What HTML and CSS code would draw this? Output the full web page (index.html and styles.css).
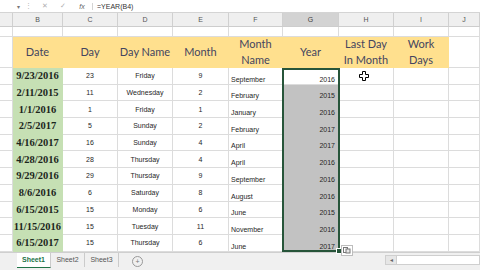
FILE: index.html
```html
<!DOCTYPE html>
<html lang="en">

<head>
    <meta charset="UTF-8">
    <meta name="viewport" content="width=device-width, initial-scale=1.0">
    <title>Book1 - Excel</title>
    <link rel="stylesheet" href="styles.css">
</head>

<body>
    <div class="formula-bar">
        <div class="name-box"><span class="arrow">&#9662;</span></div>
        <div class="grip">&#8942;</div>
        <div class="fb-btn">&#10005;</div>
        <div class="fb-btn">&#10003;</div>
        <div class="fb-btn fx"><i>fx</i></div>
        <div class="formula">=YEAR(B4)</div>
    </div>

    <div class="sheet">
        <div class="row col-heads">
            <div class="ch"></div>
            <div class="ch">B</div>
            <div class="ch">C</div>
            <div class="ch">D</div>
            <div class="ch">E</div>
            <div class="ch">F</div>
            <div class="ch sel">G</div>
            <div class="ch">H</div>
            <div class="ch">I</div>
            <div class="ch">J</div>
        </div>

        <div class="row blank">
            <div class="c"></div><div class="c"></div><div class="c"></div><div class="c"></div><div class="c"></div>
            <div class="c"></div><div class="c"></div><div class="c"></div><div class="c"></div><div class="c"></div>
        </div>

        <div class="row head">
            <div class="c"></div>
            <div class="c y">Date</div>
            <div class="c y">Day</div>
            <div class="c y">Day Name</div>
            <div class="c y">Month</div>
            <div class="c y">Month<br>Name</div>
            <div class="c y">Year</div>
            <div class="c y">Last Day<br>In Month</div>
            <div class="c y">Work<br>Days</div>
            <div class="c"></div>
        </div>

        <div class="row">
            <div class="c"></div><div class="c g">9/23/2016</div><div class="c">23</div><div class="c">Friday</div><div class="c">9</div>
            <div class="c l">September</div><div class="c r">2016</div>
            <div class="c"><svg class="cursor" width="10" height="10" viewBox="0 0 10 10"><path d="M3.5 0.5h3v3h3v3h-3v3h-3v-3h-3v-3h3z" fill="#fff" stroke="#000" stroke-width="1"/></svg></div>
            <div class="c"></div><div class="c"></div>
        </div>
        <div class="row">
            <div class="c"></div><div class="c g">2/11/2015</div><div class="c">11</div><div class="c">Wednesday</div><div class="c">2</div>
            <div class="c l">February</div><div class="c r s">2015</div><div class="c"></div><div class="c"></div><div class="c"></div>
        </div>
        <div class="row">
            <div class="c"></div><div class="c g">1/1/2016</div><div class="c">1</div><div class="c">Friday</div><div class="c">1</div>
            <div class="c l">January</div><div class="c r s">2016</div><div class="c"></div><div class="c"></div><div class="c"></div>
        </div>
        <div class="row">
            <div class="c"></div><div class="c g">2/5/2017</div><div class="c">5</div><div class="c">Sunday</div><div class="c">2</div>
            <div class="c l">February</div><div class="c r s">2017</div><div class="c"></div><div class="c"></div><div class="c"></div>
        </div>
        <div class="row">
            <div class="c"></div><div class="c g">4/16/2017</div><div class="c">16</div><div class="c">Sunday</div><div class="c">4</div>
            <div class="c l">April</div><div class="c r s">2017</div><div class="c"></div><div class="c"></div><div class="c"></div>
        </div>
        <div class="row">
            <div class="c"></div><div class="c g">4/28/2016</div><div class="c">28</div><div class="c">Thursday</div><div class="c">4</div>
            <div class="c l">April</div><div class="c r s">2016</div><div class="c"></div><div class="c"></div><div class="c"></div>
        </div>
        <div class="row">
            <div class="c"></div><div class="c g">9/29/2016</div><div class="c">29</div><div class="c">Thursday</div><div class="c">9</div>
            <div class="c l">September</div><div class="c r s">2016</div><div class="c"></div><div class="c"></div><div class="c"></div>
        </div>
        <div class="row">
            <div class="c"></div><div class="c g">8/6/2016</div><div class="c">6</div><div class="c">Saturday</div><div class="c">8</div>
            <div class="c l">August</div><div class="c r s">2016</div><div class="c"></div><div class="c"></div><div class="c"></div>
        </div>
        <div class="row">
            <div class="c"></div><div class="c g">6/15/2015</div><div class="c">15</div><div class="c">Monday</div><div class="c">6</div>
            <div class="c l">June</div><div class="c r s">2015</div><div class="c"></div><div class="c"></div><div class="c"></div>
        </div>
        <div class="row">
            <div class="c"></div><div class="c g">11/15/2016</div><div class="c">15</div><div class="c">Tuesday</div><div class="c">11</div>
            <div class="c l">November</div><div class="c r s">2016</div><div class="c"></div><div class="c"></div><div class="c"></div>
        </div>
        <div class="row">
            <div class="c"></div><div class="c g">6/15/2017</div><div class="c">15</div><div class="c">Thursday</div><div class="c">6</div>
            <div class="c l">June</div><div class="c r s">2017</div><div class="c"></div><div class="c"></div><div class="c"></div>
        </div>

        <!-- selected range G4:G14 -->
        <div class="selection"><span class="handle"></span></div>
        <div class="autofill">
            <svg width="8" height="7" viewBox="0 0 8 7"><rect x="0.5" y="0.5" width="4" height="5" fill="#fff" stroke="#777"/><rect x="3" y="2" width="4" height="4" fill="#e8e8e8" stroke="#777"/></svg>
        </div>
    </div>

    <div class="tabs">
        <div class="tab active">Sheet1</div>
        <div class="tab">Sheet2</div>
        <div class="tab">Sheet3</div>
        <div class="add">+</div>
        <div class="spacer"></div>
        <div class="scroll">
            <span class="scroll-btn">&#9666;</span>
            <span class="scroll-track"></span>
        </div>
    </div>
</body>

</html>
```

FILE: styles.css
```css
body {
    margin: 0;
    padding: 0;
    width: 480px;
    height: 270px;
    overflow: hidden;
    background-color: #ffffff;
    font-family: "Liberation Sans", Arial, sans-serif;
}

/* formula bar */
.formula-bar {
    height: 12px;
    display: flex;
    align-items: center;
    border-bottom: 1px solid #d4d4d4;
    font-size: 7px;
    color: #333;
}

.name-box {
    width: 20px;
    display: flex;
    justify-content: flex-end;
    color: #777;
}

.arrow {
    font-size: 6px;
}

.grip {
    width: 16px;
    text-align: center;
    color: #b5b5b5;
}

.fb-btn {
    width: 18px;
    text-align: center;
    color: #b0b0b0;
}

.fx {
    color: #666;
    border-right: 1px solid #d4d4d4;
    width: 20px;
    margin-right: 4px;
}

.formula {
    color: #333;
}

/* grid */
.sheet {
    position: relative;
}

.row {
    display: grid;
    grid-template-columns: 13px 50px 55px 55px 56px 54px 56px 55px 55px 1fr;
    height: 16.7px;
}

.col-heads {
    height: 14px;
    background-color: #efefef;
    border-bottom: 1px solid #cdcdcd;
    box-sizing: border-box;
}

.ch {
    border-right: 1px solid #d0d0d0;
    font-size: 7px;
    color: #555;
    display: flex;
    align-items: center;
    justify-content: center;
}

.ch.sel {
    background-color: #d3d3d3;
    color: #3c3c3c;
}

.blank {
    height: 10px;
}

.head {
    height: 31px;
}

.c {
    box-sizing: border-box;
    border-right: 1px solid #dcdcdc;
    border-bottom: 1px solid #dcdcdc;
    font-size: 7px;
    color: #262626;
    display: flex;
    align-items: center;
    justify-content: center;
    white-space: nowrap;
    overflow: hidden;
}

.c.l {
    justify-content: flex-start;
    align-items: flex-end;
    padding-left: 2px;
    padding-bottom: 1px;
}

.c.r {
    justify-content: flex-end;
    align-items: flex-end;
    padding-right: 3px;
    padding-bottom: 1px;
}

.c.y {
    background-color: #ffe08e;
    border-color: #ffe08e;
    font-family: Lato, "Open Sans", sans-serif;
    font-size: 11px;
    line-height: 16px;
    color: #44455f;
    text-align: center;
}

.c.g {
    background-color: #c6e0b4;
    border-color: #c6e0b4;
    font-family: "Liberation Serif", "Times New Roman", serif;
    font-weight: bold;
    font-size: 10.5px;
    color: #1c261c;
}

.c.s {
    background-color: #c2c2c2;
    border-bottom-color: #c2c2c2;
}

.cursor {
    margin-left: -4px;
}

.selection {
    position: absolute;
    left: 282px;
    top: 55px;
    width: 58px;
    height: 184px;
    box-sizing: border-box;
    border: 2px solid #27553a;
}

.handle {
    position: absolute;
    right: -4px;
    bottom: -4px;
    width: 4px;
    height: 4px;
    background-color: #27553a;
    border: 1px solid #fff;
}

.autofill {
    position: absolute;
    left: 341px;
    top: 232px;
    width: 10px;
    height: 9px;
    background-color: #fff;
    border: 1px solid #bdbdbd;
    display: flex;
    align-items: center;
    justify-content: center;
}

/* sheet tabs */
.tabs {
    height: 18px;
    box-sizing: border-box;
    background-color: #f0f0f0;
    border-top: 1px solid #cfcfcf;
    display: flex;
    align-items: stretch;
    padding-left: 17px;
    font-size: 7px;
    color: #555;
}

.tab {
    width: 33px;
    display: flex;
    align-items: center;
    justify-content: center;
    border-right: 1px solid #cbcbcb;
    margin-bottom: 3px;
}

.tab.active {
    background-color: #fff;
    color: #217346;
    font-weight: bold;
    border-bottom: 1px solid #217346;
    margin-bottom: 2px;
}

.add {
    width: 9px;
    height: 9px;
    margin: 3px 0 0 13px;
    border: 1px solid #999;
    border-radius: 50%;
    font-size: 7px;
    line-height: 9px;
    text-align: center;
    color: #777;
}

.spacer {
    flex: 1;
}

.scroll {
    width: 95px;
    display: flex;
    align-items: center;
    margin-top: -2px;
}

.scroll-btn {
    width: 10px;
    height: 8px;
    font-size: 6px;
    line-height: 8px;
    text-align: center;
    color: #666;
    background-color: #e6e6e6;
    border: 1px solid #cfcfcf;
}

.scroll-track {
    flex: 1;
    height: 8px;
    background-color: #fff;
    border: 1px solid #cfcfcf;
    border-left: none;
}
```
